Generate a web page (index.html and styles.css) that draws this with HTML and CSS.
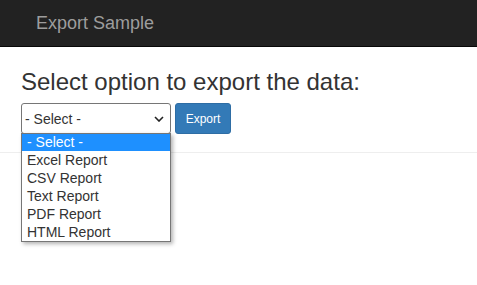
FILE: index.html
```html
<!DOCTYPE html>
<html>
<head>
<meta charset="utf-8">
<link rel="stylesheet" href="styles.css">
</head>
<body>
<nav class="navbar"><span class="brand">Export Sample</span></nav>
<main class="content">
  <h2 class="title">Select option to export the data:</h2>
  <div class="form-row">
    <div class="select-wrap">
      <div class="select-box">
        <span>- Select -</span>
        <svg class="chev" width="10" height="6" viewBox="0 0 10 6"><path d="M1 1 L5 5 L9 1" fill="none" stroke="#222" stroke-width="1.6"/></svg>
      </div>
      <div class="dropdown">
        <div class="opt selected">- Select -</div>
        <div class="opt">Excel Report</div>
        <div class="opt">CSV Report</div>
        <div class="opt">Text Report</div>
        <div class="opt">PDF Report</div>
        <div class="opt">HTML Report</div>
      </div>
    </div>
    <button class="btn">Export</button>
  </div>
</main>
<div class="rule"></div>
</body>
</html>
```
FILE: styles.css
```css
html, body { margin: 0; padding: 0; background: #fff; }
body { font-family: "Liberation Sans", Arial, sans-serif; color: #333; min-height: 285px; }
.navbar {
  height: 46px;
  background: #222;
  border-bottom: 1px solid #080808;
  display: flex;
  align-items: center;
  padding-left: 36px;
}
.brand { color: #9d9d9d; font-size: 18px; }
.content { padding: 0 21px; position: relative; z-index: 5; }
.title {
  margin: 20px 0 0;
  font-size: 24px;
  font-weight: normal;
  line-height: 30px;
  color: #333;
}
.form-row { display: flex; gap: 4px; margin-top: 6px; height: 31px; }
.select-wrap { position: relative; width: 150px; z-index: 5; }
.select-box {
  box-sizing: border-box;
  height: 31px;
  border: 1px solid #767676;
  border-radius: 3px;
  display: flex;
  align-items: center;
  justify-content: space-between;
  padding: 0 6px 0 3px;
  font-size: 14px;
  color: #333;
  background: #fff;
}
.chev { margin-top: 1px; }
.dropdown {
  position: absolute;
  left: 0;
  top: 30px;
  width: 150px;
  box-sizing: border-box;
  background: #fff;
  border: 1px solid #767676;
  box-shadow: 2px 2px 4px rgba(0,0,0,0.3);
  z-index: 10;
}
.opt {
  height: 18px;
  line-height: 18px;
  font-size: 14px;
  padding-left: 5px;
  color: #333;
}
.opt.selected { background: #1e90ff; color: #fff; height: 17px; line-height: 17px; }
.btn {
  width: 56px;
  height: 31px;
  background: #337ab7;
  border: 1px solid #2e6da4;
  border-radius: 3px;
  color: #fff;
  font-family: "Liberation Sans", Arial, sans-serif;
  font-size: 12px;
  padding: 0;
}
.rule { height: 1px; background: #eee; margin-top: 18px; }
```
